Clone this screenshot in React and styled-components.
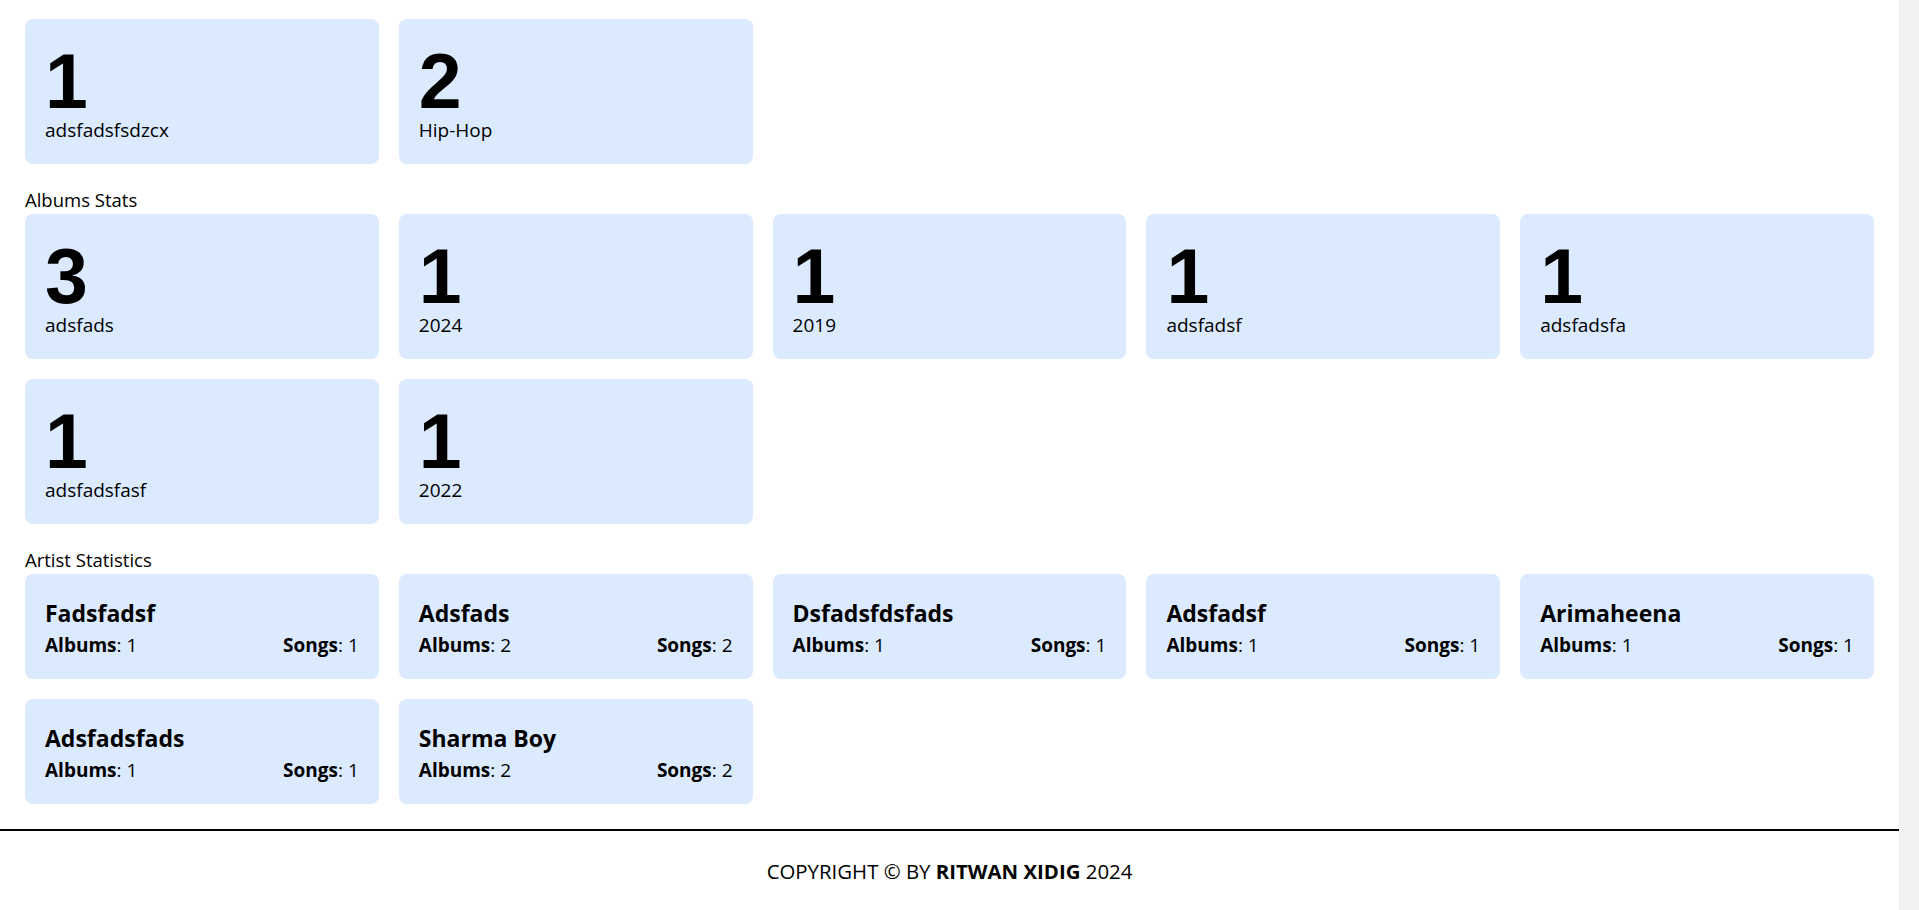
import React from 'react'
import styled, { createGlobalStyle } from 'styled-components';

const genres = [
  { count: 1, name: 'adsfadsfsdzcx' },
  { count: 2, name: 'Hip-Hop' },
];

const albums = [
  { count: 3, name: 'adsfads' },
  { count: 1, name: '2024' },
  { count: 1, name: '2019' },
  { count: 1, name: 'adsfadsf' },
  { count: 1, name: 'adsfadsfa' },
  { count: 1, name: 'adsfadsfasf' },
  { count: 1, name: '2022' },
];

const artists = [
  { name: 'Fadsfadsf', albums: 1, songs: 1 },
  { name: 'Adsfads', albums: 2, songs: 2 },
  { name: 'Dsfadsfdsfads', albums: 1, songs: 1 },
  { name: 'Adsfadsf', albums: 1, songs: 1 },
  { name: 'Arimaheena', albums: 1, songs: 1 },
  { name: 'Adsfadsfads', albums: 1, songs: 1 },
  { name: 'Sharma Boy', albums: 2, songs: 2 },
];

function App() {
  return (
    <>
      <GlobalStyle />
      <Page>
        <MainContainer>
          <Grid>
            {genres.map((g) => (
              <StatCard key={g.name}>
                <Count>{g.count}</Count>
                <Label>{g.name}</Label>
              </StatCard>
            ))}
          </Grid>

          <SectionTitle>Albums Stats</SectionTitle>
          <Grid>
            {albums.map((a) => (
              <StatCard key={a.name}>
                <Count>{a.count}</Count>
                <Label>{a.name}</Label>
              </StatCard>
            ))}
          </Grid>

          <SectionTitle>Artist Statistics</SectionTitle>
          <Grid>
            {artists.map((a) => (
              <ArtistCard key={a.name}>
                <ArtistName>{a.name}</ArtistName>
                <ArtistRow>
                  <span><b>Albums</b>: {a.albums}</span>
                  <span><b>Songs</b>: {a.songs}</span>
                </ArtistRow>
              </ArtistCard>
            ))}
          </Grid>
        </MainContainer>

        <Footer>
          COPYRIGHT © BY <b>RITWAN XIDIG</b> 2024
        </Footer>
      </Page>
    </>
  );
}

export default App;

// the reference keeps a 20px scrollbar gutter on the right
const GlobalStyle = createGlobalStyle`
html {
  background: #f1f1f1;
}
body {
  margin: 0 20px 0 0;
  background: #fff;
  color: #000;
  font-family: "Open Sans", "Noto Sans", sans-serif;
}
`;

const Page = styled.div`
min-height: 100vh;
display: flex;
flex-direction: column;
`;

const MainContainer = styled.div`
padding: 19px 25px 0;
flex: 1;
`;

const Grid = styled.div`
display: grid;
grid-template-columns: repeat(5, 1fr);
gap: 20px;
`;

const SectionTitle = styled.h3`
margin: 21px 0 0;
font-size: 18.5px;
line-height: 29px;
font-weight: 400;
`;

const StatCard = styled.div`
background: #dbeafe;
border-radius: 8px;
padding: 24px 20px;
`;

const Count = styled.h1`
margin: 0;
font-family: "Liberation Sans", Arial, sans-serif;
font-size: 77px;
line-height: 77px;
font-weight: 700;
`;

const Label = styled.p`
margin: 0;
font-size: 19px;
line-height: 20px;
font-weight: 500;
`;

const ArtistCard = styled.div`
background: #dbeafe;
border-radius: 8px;
padding: 23px 20px 20px;
`;

const ArtistName = styled.h2`
margin: 0 0 3px;
font-size: 23px;
line-height: 32px;
font-weight: 700;
`;

const ArtistRow = styled.div`
display: flex;
justify-content: space-between;
font-size: 19px;
line-height: 27px;

b {
  font-weight: 700;
}
`;

const Footer = styled.footer`
margin-top: 25px;
border-top: 2px solid #000;
padding: 27px 0 25px;
text-align: center;
font-size: 20.4px;
line-height: 27px;

b {
  font-weight: 700;
}
`;
